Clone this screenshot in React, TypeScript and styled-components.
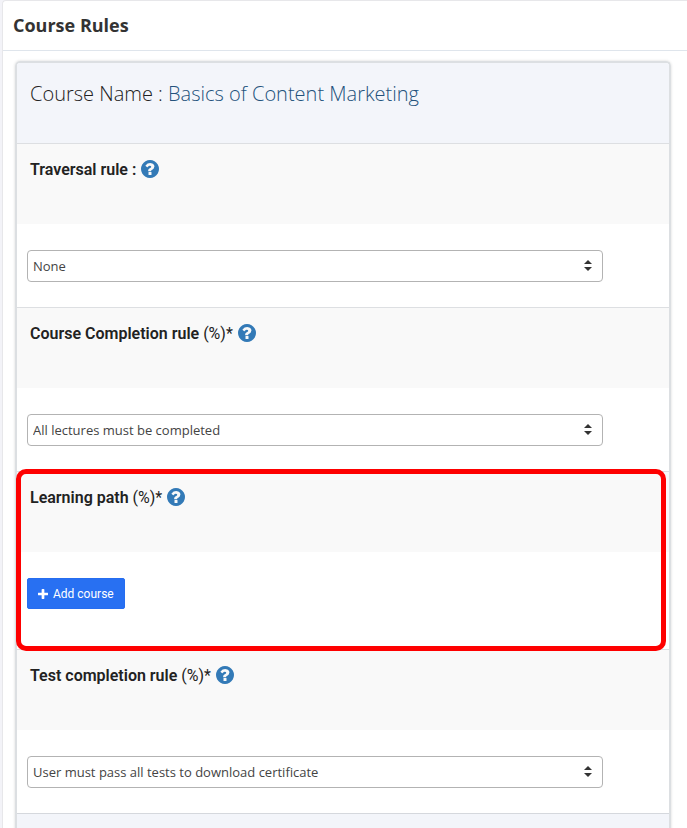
import React from "react";
import styled, { createGlobalStyle } from "styled-components";

const GlobalStyle = createGlobalStyle`
  *, *::before, *::after { box-sizing: border-box; }
  html, body { margin: 0; background: #f3f3f8; }
  body { font-family: "Open Sans", sans-serif; color: #333; }
`;

const Page = styled.main`
  padding-left: 2px;
  height: 100vh;
  overflow: hidden;
`;

const Panel = styled.section`
  min-height: 100%;
  background: #fff;
  border: 1px solid #e7e7ea;
  border-right: 0;
  border-bottom: 0;
  border-top-left-radius: 4px;
`;

const PanelTitle = styled.h1`
  margin: 0;
  padding: 12px 10px 13px;
  border-bottom: 1px solid #dfe5ec;
  font-size: 18px;
  font-weight: 700;
  line-height: 24px;
  color: #333;
`;

const PanelBody = styled.div`
  padding: 10px 16px 0 12px;
`;

const Card = styled.form`
  border: 2px solid #dcdfe2;
  border-bottom: 0;
  border-radius: 5px 5px 0 0;
  box-shadow: 0 0 3px rgba(0, 0, 0, 0.16);
`;

const CardHead = styled.header`
  padding: 15px 13px 33px;
  background: #f3f5fa;
  border-radius: 3px 3px 0 0;
`;

const CourseName = styled.h2`
  margin: 0;
  font-size: 20px;
  font-weight: 300;
  line-height: 32px;
  color: #222;
`;

const CourseLink = styled.a`
  color: #23527c;
  text-decoration: none;
`;

const Rule = styled.section<{ $marked?: boolean }>`
  position: relative;
  border-top: 1px solid #dddfe2;

  ${({ $marked }) =>
    $marked &&
    `&::after {
      content: "";
      position: absolute;
      inset: -3px 3px -2px -1px;
      border: 5px solid #fe0000;
      border-radius: 10px;
      pointer-events: none;
      z-index: 1;
    }`}
`;

const RuleHead = styled.div`
  display: flex;
  align-items: flex-start;
  gap: 5px;
  height: 80px;
  padding: 14px 13px 0;
  background: #f9f9f9;
  font-family: Roboto, sans-serif;
  font-size: 16px;
  line-height: 24px;
  color: #222;
`;

const RuleLabel = styled.label`
  font-weight: 600;
`;

const RuleTitle = styled.h3`
  margin: 0;
  font-size: 16px;
  font-weight: 600;
`;

const Unit = styled.span`
  font-weight: 400;
`;

const HelpButton = styled.button`
  display: flex;
  margin-top: 2px;
  padding: 0;
  border: 0;
  background: none;
  color: #337ab7;
  cursor: pointer;
`;

const RuleBody = styled.div<{ $tall?: boolean }>`
  padding: 26px 66px ${({ $tall }) => ($tall ? 40 : 25)}px 10px;
  background: #fff;
`;

const SelectWrap = styled.div`
  display: grid;
  align-items: center;

  & > * {
    grid-area: 1 / 1;
  }

  & > svg {
    justify-self: end;
    margin-right: 11px;
    pointer-events: none;
  }
`;

const Select = styled.select`
  appearance: none;
  width: 100%;
  height: 32px;
  padding: 0 32px 0 5px;
  border: 1px solid #b3b3b3;
  border-radius: 4px;
  background: #fff;
  color: #444;
  font-family: "Open Sans", sans-serif;
  font-size: 13px;
`;

const AddButton = styled.button`
  display: flex;
  align-items: center;
  gap: 5px;
  height: 31px;
  padding: 0 10px;
  border: 1px solid #266df0;
  border-radius: 2px;
  background: #2870f2;
  color: #fff;
  font-family: Roboto, sans-serif;
  font-size: 12px;
  font-weight: 400;
  cursor: pointer;
`;

const CardFoot = styled.footer`
  height: 80px;
  border-top: 1px solid #d5d8dd;
  background: #f3f5fa;
`;

const HelpIcon = () => (
  <svg width="18" height="18" viewBox="128 128 1536 1536" fill="currentColor" aria-hidden="true">
    <path d="M1024 1376v-192q0-14-9-23t-23-9h-192q-14 0-23 9t-9 23v192q0 14 9 23t23 9h192q14 0 23-9t9-23zm256-672q0-88-55.500-163t-138.500-116-170-41q-243 0-400 213-15 25 8 44l132 100q7 6 19 6 16 0 25-12 53-68 86-92 34-24 86-24 48 0 85.500 26t37.500 59q0 38-20 61t-68 45q-63 28-115.500 86.500t-52.500 125.500v36q0 14 9 23t23 9h192q14 0 23-9t9-23q0-19 21.500-49.500t54.500-49.500q32-18 49-28.500t46-35 44.500-48 28-60.500 12.500-81zm384 192q0 209-103 385.500t-279.500 279.500-385.500 103-385.500-103-279.500-279.500-103-385.500 103-385.500 279.500-279.500 385.500-103 385.500 103 279.500 279.500 103 385.500z" />
  </svg>
);

const PlusIcon = () => (
  <svg width="10" height="10" viewBox="192 128 1408 1408" fill="currentColor" aria-hidden="true">
    <path d="M1600 736v192q0 40-28 68t-68 28h-416v416q0 40-28 68t-68 28h-192q-40 0-68-28t-28-68v-416h-416q-40 0-68-28t-28-68v-192q0-40 28-68t68-28h416v-416q0-40 28-68t68-28h192q40 0 68 28t28 68v416h416q40 0 68 28t28 68z" />
  </svg>
);

const SortIcon = () => (
  <svg width="8" height="12" viewBox="0 0 8 12" fill="#333" aria-hidden="true">
    <path d="M4 0L8 4H0zM0 7H8L4 11z" />
  </svg>
);

const Help = ({ topic }: { topic: string }) => (
  <HelpButton type="button" aria-label={`Help: ${topic}`}>
    <HelpIcon />
  </HelpButton>
);

type SelectRuleProps = { id: string; name: string; unit?: string; value: string };

const SelectRule = ({ id, name, unit, value }: SelectRuleProps) => (
  <Rule>
    <RuleHead>
      <RuleLabel htmlFor={id}>
        {name} {unit ? <Unit>{unit}</Unit> : ":"}
      </RuleLabel>
      <Help topic={name} />
    </RuleHead>
    <RuleBody>
      <SelectWrap>
        <Select id={id} defaultValue={value}>
          <option>{value}</option>
        </Select>
        <SortIcon />
      </SelectWrap>
    </RuleBody>
  </Rule>
);

export default function App() {
  return (
    <Page>
      <GlobalStyle />
      <Panel>
        <PanelTitle>Course Rules</PanelTitle>
        <PanelBody>
          <Card>
            <CardHead>
              <CourseName>
                Course Name : <CourseLink href="#course">Basics of Content Marketing</CourseLink>
              </CourseName>
            </CardHead>
            <SelectRule id="traversal" name="Traversal rule" value="None" />
            <SelectRule
              id="completion"
              name="Course Completion rule"
              unit="(%)*"
              value="All lectures must be completed"
            />
            <Rule $marked>
              <RuleHead>
                <RuleTitle>
                  Learning path <Unit>(%)*</Unit>
                </RuleTitle>
                <Help topic="Learning path" />
              </RuleHead>
              <RuleBody $tall>
                <AddButton type="button">
                  <PlusIcon />
                  Add course
                </AddButton>
              </RuleBody>
            </Rule>
            <SelectRule
              id="tests"
              name="Test completion rule"
              unit="(%)*"
              value="User must pass all tests to download certificate"
            />
            <CardFoot />
          </Card>
        </PanelBody>
      </Panel>
    </Page>
  );
}
